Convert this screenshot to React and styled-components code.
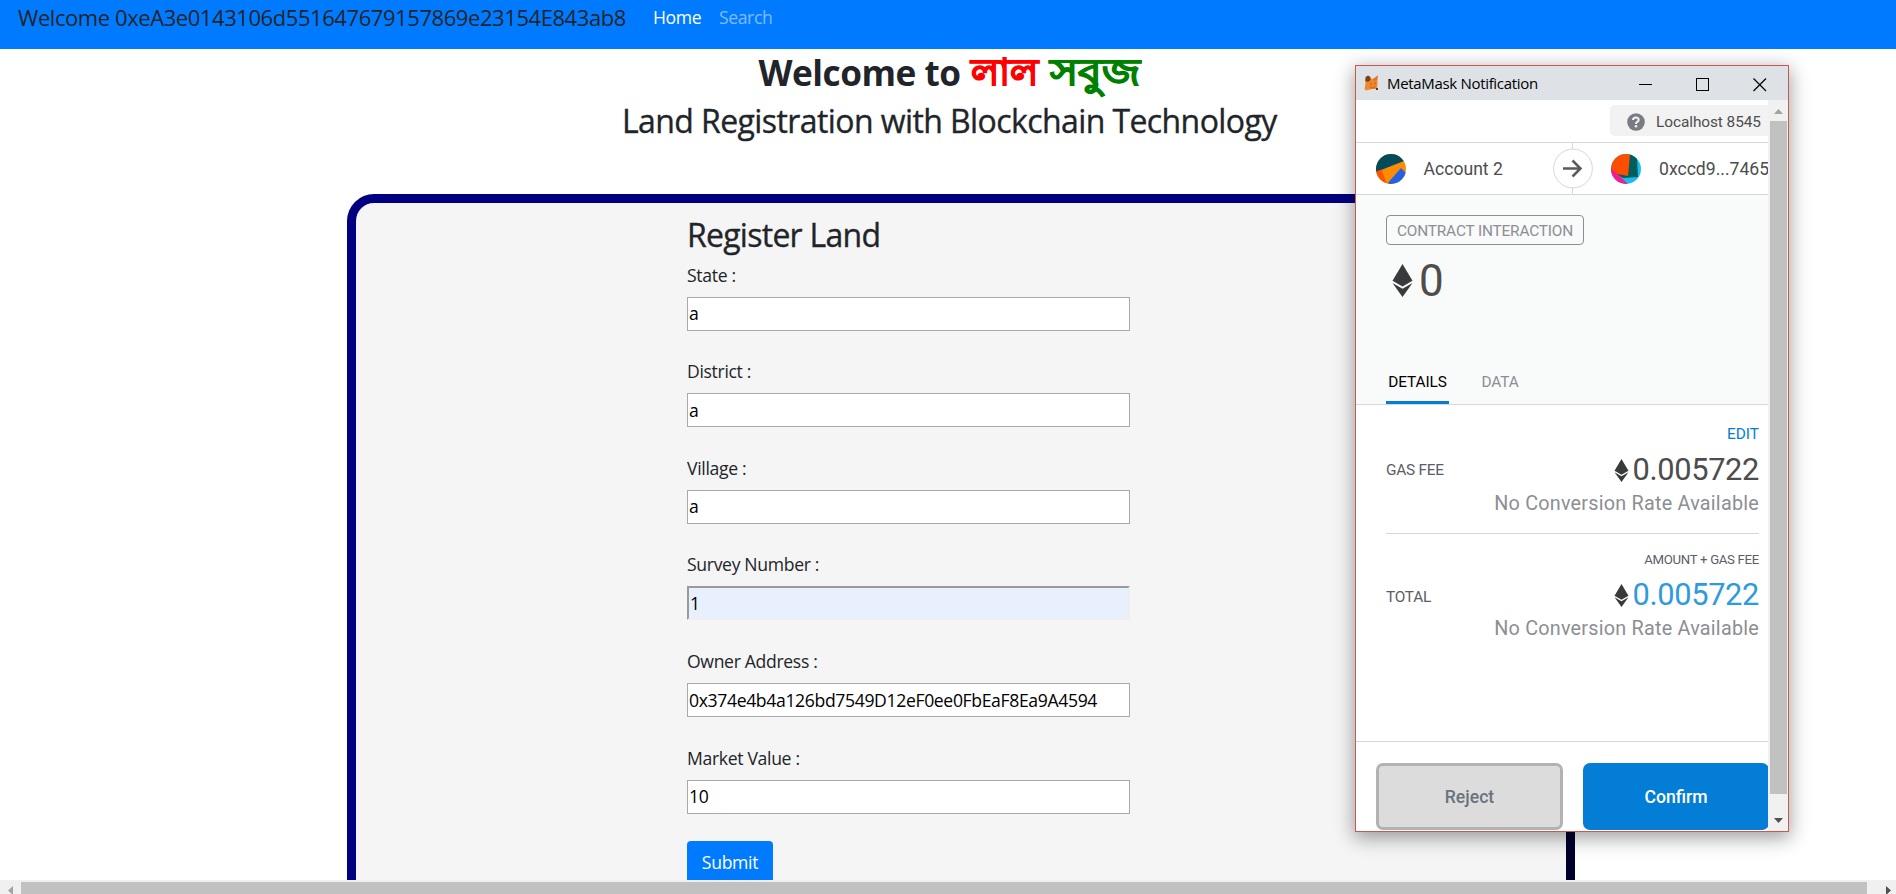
import React from 'react';
import styled, { createGlobalStyle } from 'styled-components';

const Global = createGlobalStyle`
  *, *::before, *::after { box-sizing: border-box; }
  html, body { margin: 0; height: 894px; overflow: hidden; background: #fff; }
  body { font-family: "Open Sans", "Noto Sans", sans-serif; font-size: 17.6px; line-height: 26px; color: #212529; }
  h1, h2, h3, p { margin: 0; }
`;

const Screen = styled.div`
  position: relative;
  width: 1896px;
  height: 894px;
  display: flex;
  flex-direction: column;
  overflow: hidden;
`;
const Page = styled.div`
  height: 880px;
  display: flex;
  flex-direction: column;
  align-items: center;
  overflow: hidden;
`;
const Navbar = styled.nav`
  flex: none;
  width: 100%;
  height: 49px;
  padding-left: 18px;
  display: flex;
  background: #007bff;
  white-space: nowrap;
`;
const Brand = styled.span`
  width: 635px;
  font-size: 22px;
  line-height: 34px;
  letter-spacing: -0.43px;
`;
const NavLink = styled.a`
  width: ${p => p.$w}px;
  line-height: 35px;
  color: ${p => (p.$active ? '#fff' : 'rgba(255,255,255,.5)')};
  letter-spacing: -0.4px;
`;
const Title = styled.h1`
  flex: none;
  height: 48px;
  width: 384px;
  margin-left: 5px;
  display: flex;
  font-size: 35.2px;
  line-height: 46px;
  font-weight: 700;
  letter-spacing: -0.5px;
  white-space: nowrap;
`;
const Word = styled.span`
  width: ${p => p.$w}px;
`;
const BanglaWord = styled.span`
  width: ${p => p.$w}px;
  color: ${p => p.$color};
  font-size: 37.8px;
  line-height: 44px;
  letter-spacing: 0;
  -webkit-text-stroke: 1px ${p => p.$color};
  transform: scaleX(${p => p.$stretch || 1});
  transform-origin: 0 50%;
`;
const Subtitle = styled.h2`
  flex: none;
  width: 656px;
  margin-left: 4px;
  height: 97px;
  font-size: 32px;
  line-height: 48px;
  font-weight: 500;
  letter-spacing: -0.59px;
  -webkit-text-stroke: 0.35px #212529;
  white-space: nowrap;
`;
const Card = styled.main`
  flex: none;
  width: 1228px;
  height: 800px;
  margin-left: 26px;
  padding: 11px 0 0 331px;
  border: 9px solid;
  border-color: #000080 #00002c #00002c #000080;
  border-radius: 27px;
  background: #f5f5f5;
`;
const FormTitle = styled.h2`
  height: 44.5px;
  font-size: 32px;
  line-height: 42px;
  font-weight: 500;
  letter-spacing: -0.74px;
  -webkit-text-stroke: 0.35px #212529;
`;
const Field = styled.label`
  display: flex;
  flex-direction: column;
  height: 96.67px;
`;
const LabelText = styled.span`
  height: 38px;
  line-height: 32px;
  letter-spacing: -0.33px;
`;
const Input = styled.input`
  width: 443px;
  height: 34px;
  padding: 0 1px 1px;
  border: ${p => (p.$filled ? '2px inset #eee' : '1px solid #a9a9a9')};
  background: ${p => (p.$filled ? '#e8f0fe' : '#fff')};
  font: inherit;
  color: #000;
  outline: none;
  letter-spacing: -0.36px;
`;
const Submit = styled.button`
  width: 86px;
  height: 42px;
  margin-top: 2.5px;
  padding: 0;
  border: 0;
  border-radius: 4px;
  background: #007bff;
  color: #fff;
  font: inherit;
  letter-spacing: -0.3px;
`;

const HScroll = styled.div`
  height: 14px;
  display: flex;
  align-items: center;
  background: #f0f0f0;
`;
const HArrow = styled.svg`
  flex: none;
  width: ${p => p.$w}px;
  height: 14px;
`;
const HThumb = styled.div`
  width: 1846px;
  height: 12px;
  margin-top: 2px;
  background: #c1c1c1;
`;

const Window = styled.section`
  position: absolute;
  left: 1355px;
  top: 65px;
  width: 434px;
  height: 767px;
  display: flex;
  flex-direction: column;
  border: 1px solid #c9594b;
  background: #fff;
  box-shadow: 0 5px 18px 1px rgba(0, 0, 0, .38);
  font-family: Roboto, sans-serif;
  color: #4d4d4d;
`;
const TitleBar = styled.header`
  flex: none;
  height: 34px;
  padding: 0 21px 0 8px;
  display: flex;
  align-items: center;
  background: #dee1e6;
  color: #000;
`;
const WinTitle = styled.span`
  flex: 1;
  margin-left: 8px;
  font: 15px/34px "Open Sans", sans-serif;
  letter-spacing: -0.32px;
`;
const Controls = styled.svg`
  width: 128px;
  height: 14px;
  margin-top: 3px;
`;
const Body = styled.div`
  flex: 1;
  min-height: 0;
  display: flex;
`;
const Content = styled.div`
  width: 412px;
  display: flex;
  flex-direction: column;
  overflow: hidden;
`;
const NetworkRow = styled.div`
  flex: none;
  height: 43px;
  padding-top: 5px;
  display: flex;
  justify-content: flex-end;
  border-bottom: 1px solid #d2d8dd;
`;
const Network = styled.div`
  width: 158px;
  height: 31px;
  padding: 2px 0 0 17px;
  display: flex;
  align-items: center;
  gap: 11px;
  border-radius: 5px 0 0 5px;
  background: #f2f2f2;
  font-size: 15.4px;
  letter-spacing: -0.07px;
  white-space: nowrap;
`;
const Accounts = styled.div`
  flex: none;
  height: 52px;
  padding-left: 20px;
  display: flex;
  align-items: center;
  border-bottom: 1px solid #d2d8dd;
  font-size: 17.6px;
  white-space: nowrap;
`;
const Account = styled.div`
  flex: none;
  width: ${p => p.$w}px;
  display: flex;
  align-items: center;
  gap: ${p => p.$gap}px;
`;
const ArrowMark = styled.svg`
  flex: none;
  width: 40px;
  height: 51px;
  margin-right: 18px;
`;
const Summary = styled.div`
  flex: none;
  height: 210px;
  padding: 20px 30px 0;
  display: flex;
  flex-direction: column;
  border-bottom: 1px solid #d2d8dd;
  background: #f9fafa;
`;
const Tag = styled.div`
  width: 198px;
  height: 30px;
  border: 1px solid #8c8e94;
  border-radius: 4px;
  color: #8c8e94;
  font-size: 15.4px;
  line-height: 30px;
  text-align: center;
  white-space: nowrap;
  letter-spacing: -0.17px;
`;
const Amount = styled.div`
  height: 70px;
  padding-left: 6px;
  display: flex;
  align-items: center;
  gap: 6px;
  font-size: 44px;
  line-height: 50px;
`;
const Digits = styled.span`
  padding-top: 2px;
`;
const Tabs = styled.div`
  height: 33px;
  margin-top: auto;
  display: flex;
  gap: 20px;
`;
const Tab = styled.div`
  width: ${p => p.$w}px;
  border-bottom: ${p => (p.$active ? '3px solid #037dd6' : 'none')};
  color: ${p => (p.$active ? '#000' : '#8c8e94')};
  font-size: 15.4px;
  line-height: 22px;
  text-align: center;
  letter-spacing: -0.1px;
`;
const Fee = styled.div`
  flex: none;
  height: ${p => p.$h}px;
  margin: 0 9px 0 30px;
  padding-top: ${p => p.$pt}px;
  display: flex;
  justify-content: space-between;
  border-bottom: ${p => (p.$line ? '1px solid #d2d8dd' : 'none')};
`;
const FeeName = styled.span`
  padding-top: ${p => p.$pt}px;
  font-size: 15.4px;
  color: #5b5d67;
  letter-spacing: -0.25px;
`;
const FeeSide = styled.div`
  display: flex;
  flex-direction: column;
  align-items: flex-end;
`;
const Caption = styled.span`
  height: ${p => p.$h}px;
  line-height: 20px;
  font-size: ${p => p.$size}px;
  color: ${p => p.$color};
  letter-spacing: ${p => p.$ls || 0}px;
`;
const Value = styled.span`
  height: 36px;
  display: flex;
  align-items: center;
  gap: 4px;
  font-size: 30.8px;
  line-height: 38px;
  letter-spacing: -0.36px;
  color: ${p => p.$color};
`;
const Note = styled.span`
  font-size: 19.8px;
  line-height: 32px;
  letter-spacing: 0.23px;
  color: #8c8e94;
  white-space: nowrap;
`;
const Footer = styled.footer`
  flex: 1;
  padding: 21px 0 0 20px;
  display: flex;
  gap: 20px;
  border-top: 1px solid #d2d8dd;
`;
const Action = styled.button`
  flex: none;
  width: ${p => (p.$primary ? 186 : 187)}px;
  height: 67px;
  padding: 0;
  border: ${p => (p.$primary ? 'none' : '3px solid #b2b2b2')};
  border-radius: 7px;
  background: ${p => (p.$primary ? '#037dd6' : '#dcdcdc')};
  color: ${p => (p.$primary ? '#fff' : '#6a737d')};
  font: 500 17.6px Roboto, sans-serif;
`;
const VScroll = styled.div`
  flex: 1;
  display: flex;
  flex-direction: column;
  background: #f1f1f1;
`;
const VArrow = styled.svg`
  flex: none;
  width: 20px;
  height: ${p => p.$h}px;
`;
const VThumb = styled.div`
  width: 17px;
  height: 673px;
  margin-left: 2px;
  background: #c1c1c1;
`;

const Eth = ({ w, h }) => (
  <svg width={w} height={h} viewBox="0 0 20 33" fill="#393a3c">
    <path d="M10 0 20 16.7 10 22.6 0 16.7Z" />
    <path d="M0 18.9 10 24.8 20 18.9 10 33Z" />
  </svg>
);

const Fox = () => (
  <svg width="15" height="16" viewBox="0 0 15 16">
    <path d="M1 4 5 3 9 4 14 0.500 13.500 5 13.500 9 13 14 8 14 2 15.500 0.500 14 1.500 9Z" fill="#ee8a2b" />
    <path d="M1.500 2 4 0.500 6.500 2 6.500 5 4 7 1.500 6Z" fill="#79411d" />
    <path d="M9 4 14 0.500 12.500 5 10 6Z" fill="#dd7722" />
    <path d="M5 11 9 12 12 10 11 13 7 14Z" fill="#dd701f" />
    <path d="M6 8 8 9 7 10ZM10 8 12 7.500 11 9Z" fill="#8a5228" />
    <path d="M12 13h2v2h-2z" fill="#4a3a35" />
  </svg>
);

const AvatarOne = () => (
  <svg width="30" height="30" viewBox="0 0 30 30">
    <clipPath id="a1"><circle cx="15" cy="15" r="15" /></clipPath>
    <g clipPath="url(#a1)">
      <path d="M0 0h30v30H0z" fill="#fb8c05" />
      <path d="M0 0H30L28 7 0 18Z" fill="#034a5b" />
      <path d="M0 17.500 5.500 15.500 11 30H0Z" fill="#fc5500" />
      <path d="M11 30 25 14 31 20V30Z" fill="#2460e3" />
    </g>
  </svg>
);

const AvatarTwo = () => (
  <svg width="30" height="30" viewBox="0 0 30 30">
    <clipPath id="a2"><circle cx="15" cy="15" r="15" /></clipPath>
    <g clipPath="url(#a2)">
      <path d="M0 0h30v30H0z" fill="#18bdf2" />
      <path d="M19 0 26 4 27 23 12 24 5 20Z" fill="#035e5b" />
      <path d="M0 0H19L17 22 6 20 0 15Z" fill="#fc4e00" />
      <path d="M0 14 17 30H0Z" fill="#fb1a8e" />
    </g>
  </svg>
);

const fields = [
  ['State :', 'a'],
  ['District :', 'a'],
  ['Village :', 'a'],
  ['Survey Number :', '1'],
  ['Owner Address :', '0x374e4b4a126bd7549D12eF0ee0FbEaF8Ea9A4594'],
  ['Market Value :', '10'],
];

export default function App() {
  return (
    <Screen>
      <Global />
      <Page>
        <Navbar>
          <Brand>Welcome 0xeA3e0143106d551647679157869e23154E843ab8</Brand>
          <NavLink $active $w={66}>Home</NavLink>
          <NavLink $w={60}>Search</NavLink>
        </Navbar>
        <Title>
          <Word $w={212}>Welcome to</Word>
          <BanglaWord $w={79} $color="red">লাল</BanglaWord>
          <BanglaWord $w={93} $color="green" $stretch={1.12}>সবুজ</BanglaWord>
        </Title>
        <Subtitle>Land Registration with Blockchain Technology</Subtitle>
        <Card>
          <FormTitle>Register Land</FormTitle>
          {fields.map(([name, value]) => (
            <Field key={name}>
              <LabelText>{name}</LabelText>
              <Input defaultValue={value} $filled={name.startsWith('Survey')} />
            </Field>
          ))}
          <Submit>Submit</Submit>
        </Card>
      </Page>
      <HScroll>
        <HArrow $w={21} viewBox="0 0 21 14"><path d="M13 6v9l-5-4.500z" fill="#a3a3a3" /></HArrow>
        <HThumb />
        <HArrow $w={29} viewBox="0 0 29 14"><path d="M19 6v9l5-4.500z" fill="#505050" /></HArrow>
      </HScroll>

      <Window>
        <TitleBar>
          <Fox />
          <WinTitle>MetaMask Notification</WinTitle>
          <Controls viewBox="0 0 128 14" fill="none" stroke="#000" shapeRendering="crispEdges">
            <path d="M0 6.500h13M57.500 0.500h12v12h-12z" />
            <path d="M114.500 0.500 127 13M127 0.500 114.500 13" shapeRendering="auto" strokeWidth="1.200" />
          </Controls>
        </TitleBar>
        <Body>
          <Content>
            <NetworkRow>
              <Network>
                <svg width="18" height="18" viewBox="0 0 18 18">
                  <circle cx="9" cy="9" r="8.800" fill="#7a7c83" />
                  <path d="M6 7C6.100 3.600 11.800 3.500 11.700 7 11.600 9 9 8.800 9 10.900" fill="none" stroke="#f2f2f2" strokeWidth="2" />
                  <circle cx="9" cy="13.300" r="1.300" fill="#f2f2f2" />
                </svg>
                Localhost 8545
              </Network>
            </NetworkRow>
            <Accounts>
              <Account $w={177} $gap={17.5}><AvatarOne />Account 2</Account>
              <ArrowMark viewBox="0 0 40 51" fill="none" stroke="#d2d8dd">
                <path d="M19.500 0v6M19.500 45v6" />
                <circle cx="20" cy="25.500" r="19.400" />
                <path d="M10 25.500h16M19.500 17.500l8 8-8 8" stroke="#5b5b5b" strokeWidth="2.500" />
              </ArrowMark>
              <Account $w={160} $gap={18}><AvatarTwo />0xccd9...7465</Account>
            </Accounts>
            <Summary>
              <Tag>CONTRACT INTERACTION</Tag>
              <Amount><Eth w={21} h={33} /><Digits>0</Digits></Amount>
              <Tabs>
                <Tab $active $w={63}>DETAILS</Tab>
                <Tab $w={62}>DATA</Tab>
              </Tabs>
            </Summary>
            <Fee $h={129} $pt={19} $line>
              <FeeName $pt={33}>GAS FEE</FeeName>
              <FeeSide>
                <Caption $h={28} $size={15.4} $color="#037dd6">EDIT</Caption>
                <Value $color="#4d4d4d"><Eth w={15} h={23} />0.005722</Value>
                <Note>No Conversion Rate Available</Note>
              </FeeSide>
            </Fee>
            <Fee $h={207} $pt={16}>
              <FeeName $pt={34}>TOTAL</FeeName>
              <FeeSide>
                <Caption $h={27} $size={13.2} $color="#5b5d67" $ls={-0.3}>AMOUNT + GAS FEE</Caption>
                <Value $color="#2f9ae0"><Eth w={15} h={23} />0.005722</Value>
                <Note>No Conversion Rate Available</Note>
              </FeeSide>
            </Fee>
            <Footer>
              <Action>Reject</Action>
              <Action $primary>Confirm</Action>
            </Footer>
          </Content>
          <VScroll>
            <VArrow $h={21} viewBox="0 0 20 21"><path d="M6 14h9l-4.500-5z" fill="#a3a3a3" /></VArrow>
            <VThumb />
            <VArrow $h={37} viewBox="0 0 20 37"><path d="M6 24h9l-4.500 5z" fill="#505050" /></VArrow>
          </VScroll>
        </Body>
      </Window>
    </Screen>
  );
}
